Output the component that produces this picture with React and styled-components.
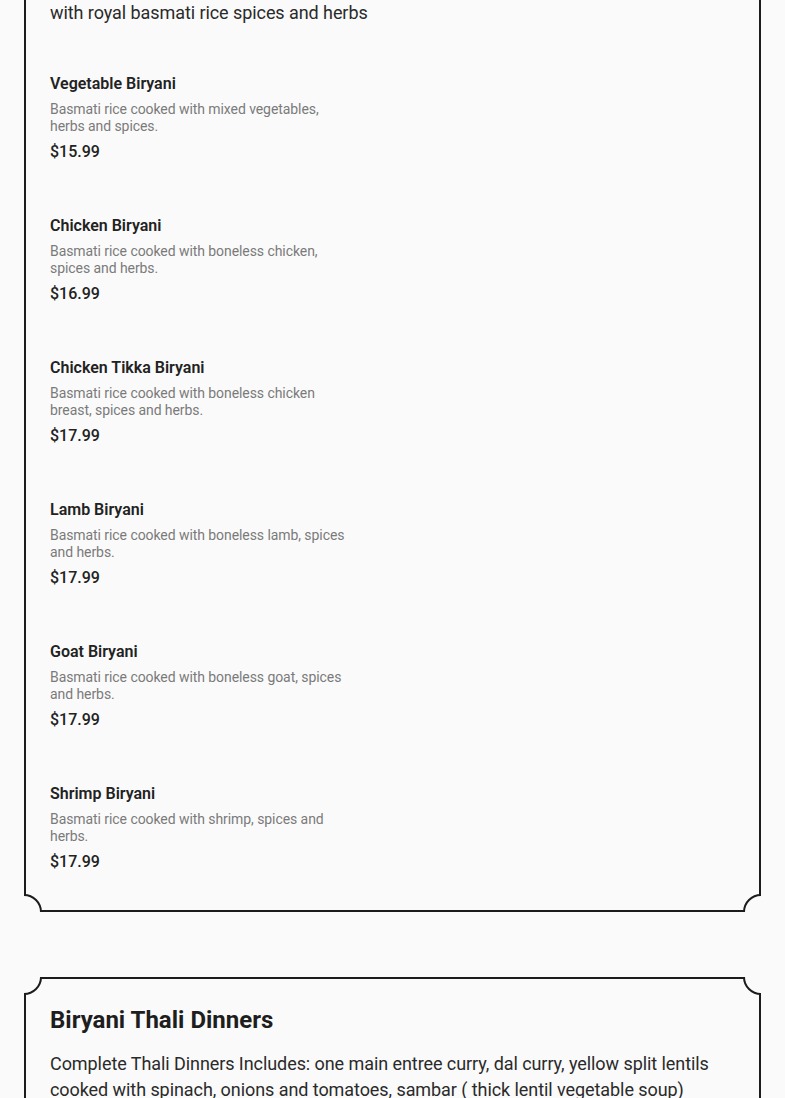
import React from "react"
import styled, { createGlobalStyle } from "styled-components"

const GlobalStyle = createGlobalStyle`
  html, body {
    margin: 0;
    padding: 0;
    background: #fafafa;
  }
  body {
    font-family: Roboto, "Liberation Sans", sans-serif;
    color: #222;
  }
`;

const Page = styled.div`
  padding: 0 24px 40px;
  display: flex;
  flex-direction: column;
  gap: 65px;
`;

const Card = styled.section`
  position: relative;
  overflow: hidden;
  padding: ${p => p.$top || 27}px 26px 39px;
  margin-top: ${p => p.$offset || 0}px;
  background: #fafafa;
`;

const Frame = styled.div`
  position: absolute;
  inset: 0;
  border: 2px solid #1c1c1c;
  pointer-events: none;
`;

const Corner = styled.span`
  position: absolute;
  width: 36px;
  height: 36px;
  box-sizing: border-box;
  border: 2px solid #1c1c1c;
  border-radius: 50%;
  background: #fafafa;
  ${p => (p.$v === "top" ? "top: -18px;" : "bottom: -18px;")}
  ${p => (p.$h === "left" ? "left: -18px;" : "right: -18px;")}
`;

const Heading = styled.h2`
  margin: 0;
  font-size: 24px;
  line-height: 32px;
  font-weight: 700;
  color: #1e1e1e;
`;

const Intro = styled.p`
  margin: ${p => (p.$spaced ? "15px" : "0")} 0 0;
  font-size: 18px;
  line-height: 26px;
  letter-spacing: -0.07px;
  color: #2a2a2a;
`;

const List = styled.div`
  display: flex;
  flex-direction: column;
  gap: 52px;
  margin-top: 47px;
`;

const Item = styled.div`
  display: flex;
  flex-direction: column;
  width: 300px;
`;

const Title = styled.h3`
  margin: 0;
  font-size: 16px;
  line-height: 22px;
  font-weight: 600;
  color: #222;
`;

const Desc = styled.p`
  margin: 6px 0 0;
  font-size: 14px;
  line-height: 17px;
  letter-spacing: -0.07px;
  color: #7a7a7a;
`;

const Price = styled.div`
  margin-top: 6px;
  font-size: 16px;
  line-height: 22px;
  font-weight: 500;
  color: #222;
`;

const items = [
  ["Vegetable Biryani", "Basmati rice cooked with mixed vegetables, herbs and spices.", "$15.99"],
  ["Chicken Biryani", "Basmati rice cooked with boneless chicken, spices and herbs.", "$16.99"],
  ["Chicken Tikka Biryani", "Basmati rice cooked with boneless chicken breast, spices and herbs.", "$17.99"],
  ["Lamb Biryani", "Basmati rice cooked with boneless lamb, spices and herbs.", "$17.99"],
  ["Goat Biryani", "Basmati rice cooked with boneless goat, spices and herbs.", "$17.99"],
  ["Shrimp Biryani", "Basmati rice cooked with shrimp, spices and herbs.", "$17.99"],
];

function Corners() {
  return (
    <>
      <Frame />
      <Corner $v="top" $h="left" />
      <Corner $v="top" $h="right" />
      <Corner $v="bottom" $h="left" />
      <Corner $v="bottom" $h="right" />
    </>
  );
}

export default function App() {
  return (
    <Page>
      <GlobalStyle />
      <Card $offset={-27} $top={27}>
        <Corners />
        <Intro>with royal basmati rice spices and herbs</Intro>
        <List>
          {items.map(([name, desc, price]) => (
            <Item key={name}>
              <Title>{name}</Title>
              <Desc>{desc}</Desc>
              <Price>{price}</Price>
            </Item>
          ))}
        </List>
      </Card>
      <Card $top={27}>
        <Corners />
        <Heading>Biryani Thali Dinners</Heading>
        <Intro $spaced>
          Complete Thali Dinners Includes: one main entree curry, dal curry, yellow split lentils
          cooked with spinach, onions and tomatoes, sambar ( thick lentil vegetable soup)
          rasam, raita, pickle, papad, rice and dessert.
        </Intro>
      </Card>
    </Page>
  );
}
